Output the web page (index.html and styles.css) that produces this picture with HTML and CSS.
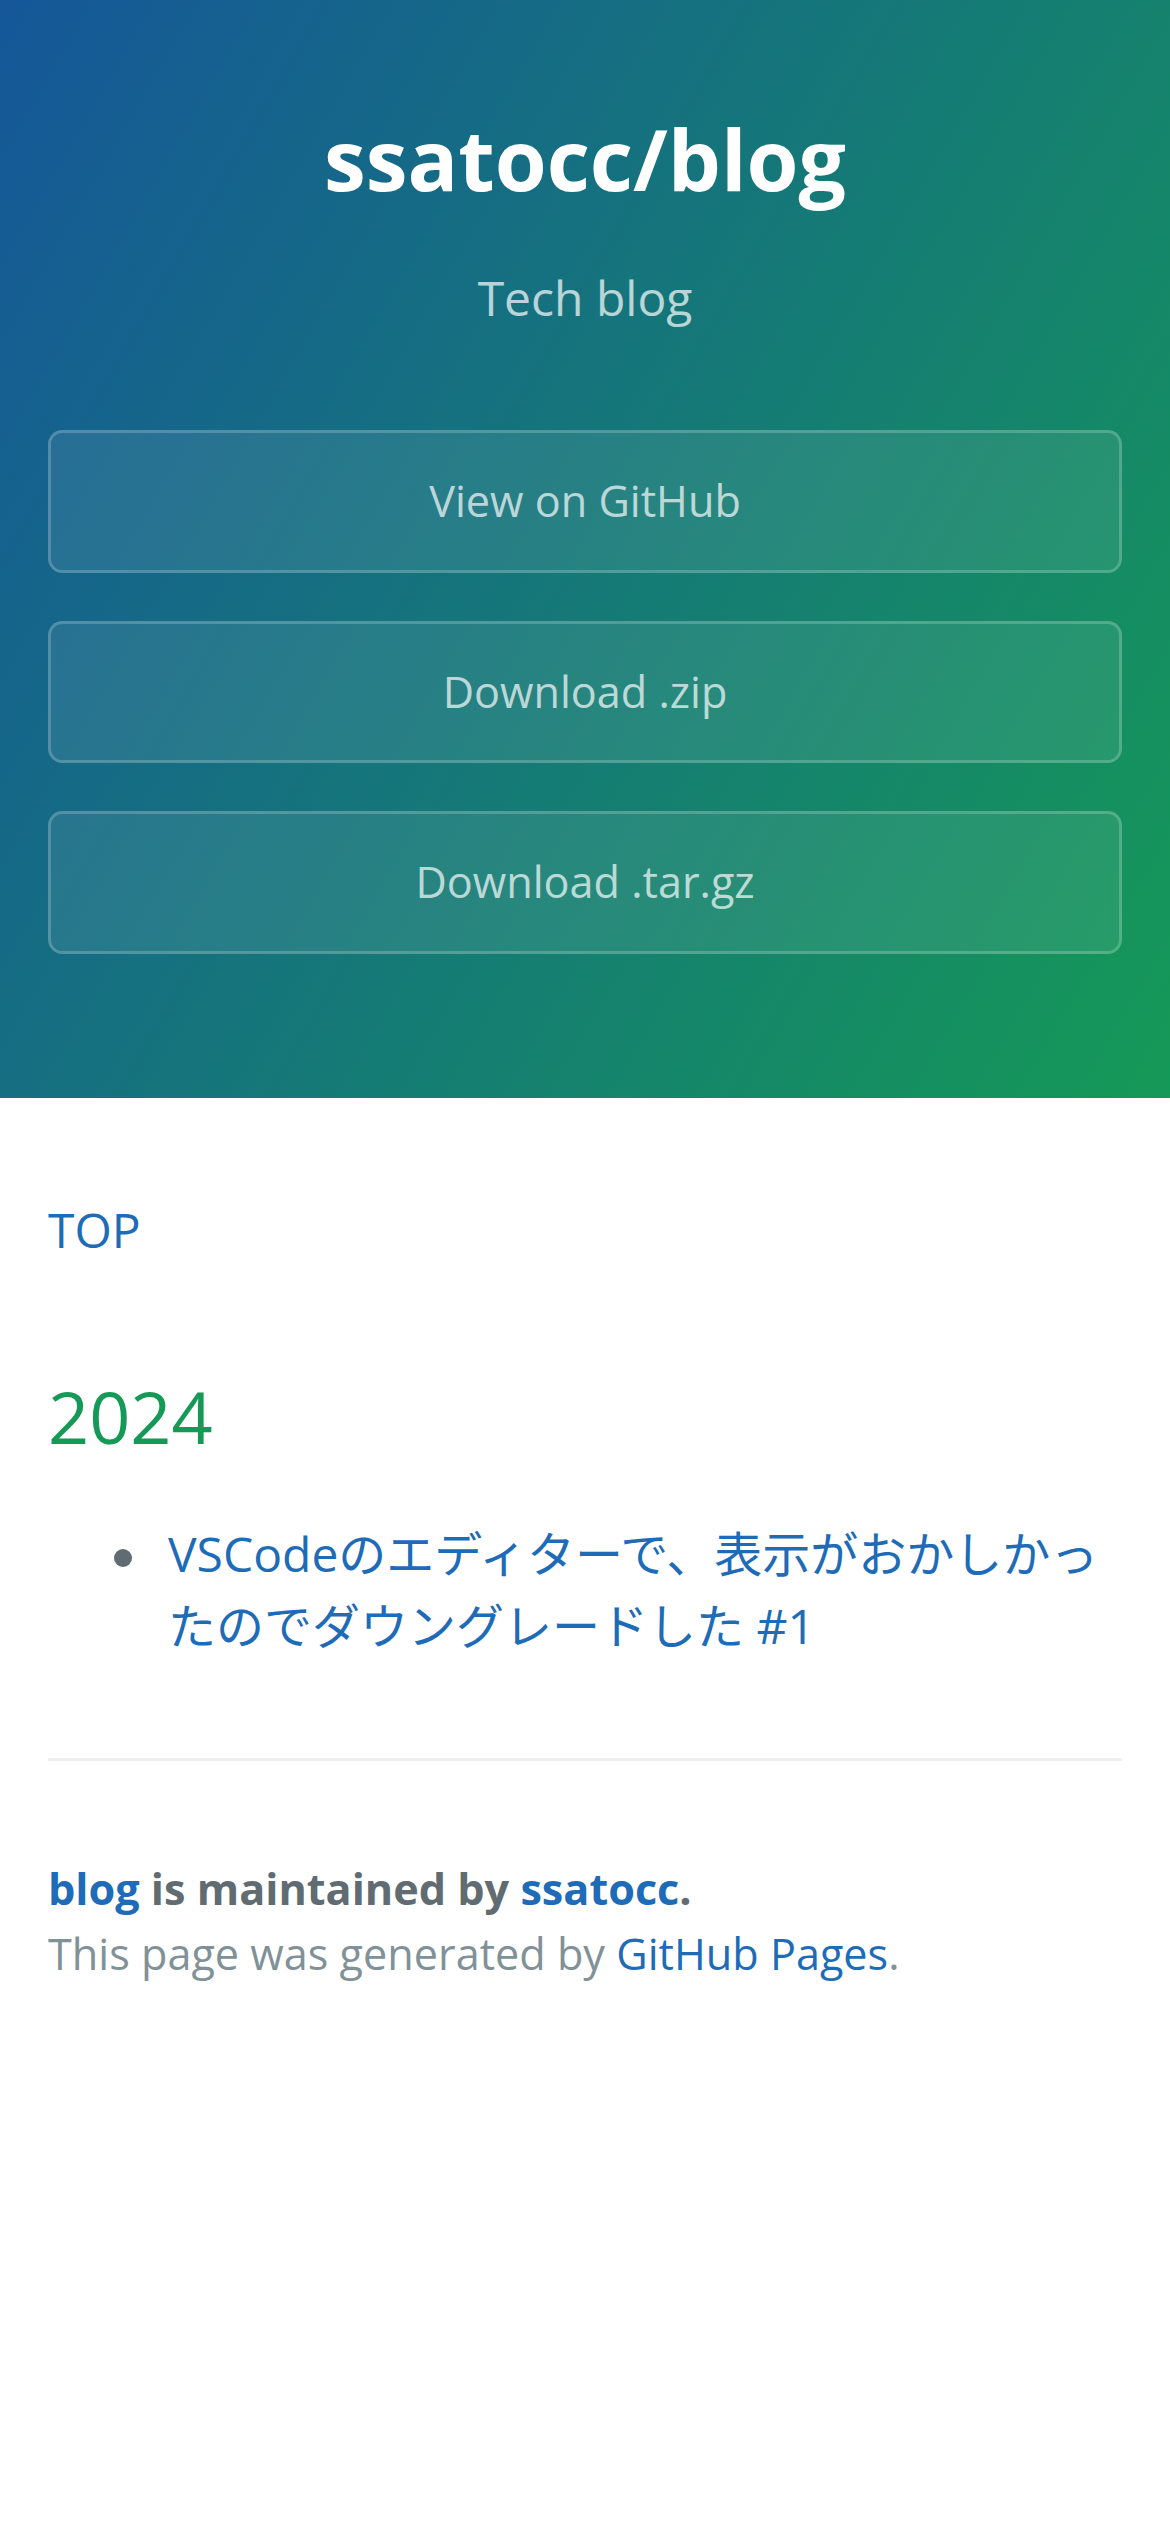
FILE: index.html
```html
<!DOCTYPE html>
<html lang="ja">
<head>
<meta charset="utf-8">
<title>ssatocc/blog</title>
<link rel="stylesheet" href="styles.css">
</head>
<body>
<header class="page-header">
  <h1 class="project-name">ssatocc/blog</h1>
  <h2 class="project-tagline">Tech blog</h2>
  <a href="#" class="btn">View on GitHub</a>
  <a href="#" class="btn">Download .zip</a>
  <a href="#" class="btn">Download .tar.gz</a>
</header>
<main class="main-content">
  <p class="top-link"><a href="#">TOP</a></p>
  <h2 class="year">2024</h2>
  <ul class="post-list">
    <li><a href="#">VSCodeのエディターで、表示がおかしかったのでダウングレードした #1</a></li>
  </ul>
  <footer class="site-footer">
    <span class="site-footer-owner"><a href="#">blog</a> is maintained by <a href="#">ssatocc</a>.</span>
    <span class="site-footer-credits">This page was generated by <a href="#">GitHub Pages</a>.</span>
  </footer>
</main>
</body>
</html>
```
FILE: styles.css
```css
html, body {
  margin: 0;
  padding: 0;
}
body {
  font-family: "Open Sans", "Noto Sans CJK JP", "Helvetica Neue", Arial, sans-serif;
  font-size: 48px;
  line-height: 1.5;
  color: #606c71;
  background: #fff;
}
a {
  color: #1e6bb8;
  text-decoration: none;
}
.page-header {
  color: #fff;
  text-align: center;
  background-color: #159957;
  background-image: linear-gradient(120deg, #155799, #159957);
  padding: 96px 48px;
}
.project-name {
  margin: 0 0 4.8px;
  font-size: 84px;
  font-weight: bold;
  line-height: 1.5;
}
.project-tagline {
  margin: 39.84px 0 96px;
  font-size: 48px;
  font-weight: normal;
  line-height: 1.5;
  opacity: 0.7;
}
.btn {
  display: block;
  width: 100%;
  box-sizing: border-box;
  padding: 36px;
  font-size: 43.2px;
  line-height: 1.5;
  color: rgba(255, 255, 255, 0.7);
  background-color: rgba(255, 255, 255, 0.08);
  border: 3px solid rgba(255, 255, 255, 0.2);
  border-radius: 14.4px;
  margin-bottom: 48px;
}
.main-content {
  padding: 96px 48px;
  word-wrap: break-word;
}
.top-link {
  margin: 0 0 48px;
}
.year {
  margin: 96px 0 48px;
  font-size: 72px;
  font-weight: normal;
  line-height: 1.5;
  color: #159957;
}
.post-list {
  margin: 0 0 48px;
  padding-left: 66px;
  list-style: none;
}
.post-list li {
  display: flex;
  align-items: flex-start;
}
.post-list li::before {
  content: "";
  flex: 0 0 18px;
  width: 18px;
  height: 18px;
  margin: 31px 36px 0 0;
  border-radius: 50%;
  background: #606c71;
}
.site-footer {
  margin-top: 96px;
  padding-top: 96px;
  border-top: 3px solid #eff0f1;
  font-size: 43.2px;
  line-height: 1.5;
}
.site-footer-owner {
  display: block;
  font-weight: bold;
}
.site-footer-credits {
  display: block;
  color: #819198;
}
```
